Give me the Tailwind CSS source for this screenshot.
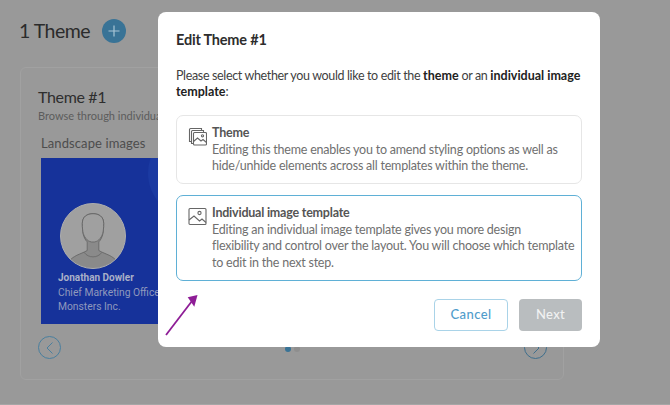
<!DOCTYPE html>
<html>
<head>
<meta charset="utf-8">
<script src="https://cdn.jsdelivr.net/npm/@tailwindcss/browser@4"></script>
</head>
<body class="m-0 overflow-hidden">
<div class="relative w-[670px] h-[405px] overflow-hidden bg-[#999999] font-['Lato','Open_Sans',sans-serif] border-b border-[#a6a6a6]">
  <div class="pt-[18px] pl-[19px] flex items-center h-[44px]">
    <h1 class="w-[83px] text-[19.5px] leading-[26px] tracking-[-0.5px] text-[#2b2b2b] font-normal">1 Theme</h1>
    <div class="w-[24px] h-[24px] rounded-full bg-[#397396] flex items-center justify-center">
      <svg width="12" height="12" viewBox="0 0 12 12" fill="none" stroke="#a9c6d6" stroke-width="1.2"><path d="M6 0.5V11.5M0.5 6H11.5"/></svg>
    </div>
  </div>
  <section class="mt-[23px] ml-[20px] w-[544px] h-[313px] rounded-[6px] border border-[#a1a1a1] pt-[19px] pl-[17px]">
    <h2 class="text-[16px] leading-[20px] tracking-[-0.35px] text-[#2e2e2e] font-normal">Theme #1</h2>
    <p class="mt-[1px] text-[11px] leading-[16px] tracking-[0px] text-[#5c5c5c] whitespace-nowrap">Browse through individual</p>
    <h3 class="mt-[11px] ml-[3px] text-[13px] leading-[16px] tracking-[0.1px] text-[#4d4d4d]">Landscape images</h3>
    <div class="relative mt-[7px] ml-[3px] w-[125px] h-[166px] bg-[#16329a] overflow-hidden">
      <div class="absolute left-[107px] top-[-30px] w-[90px] h-[90px] rounded-full bg-[#1b3aa2]"></div>
      <div class="absolute left-[19px] top-[45px] w-[66px] h-[66px] rounded-full bg-[#a0a0a0] border border-[#aeaeae] overflow-hidden">
        <svg width="64" height="64" viewBox="0 0 66 66" fill="none">
          <path d="M8 60C12 53 20 52 27 48V39C23 35 22 29 22 20C22 13 27 10 33 10S44 13 44 20C44 29 43 35 39 39V48C46 52 54 53 58 60V68H8Z" fill="#8a8a8a" stroke="#666666" stroke-width="0.9"/>
          <path d="M22 20C22 13 27 10 33 10S44 13 44 20C44 29 43 33 39 37C36 40 30 40 27 37C23 33 22 29 22 20Z" fill="#a0a0a0" stroke="#666666" stroke-width="0.9"/>
          <path d="M24 50C28 56 38 56 42 50" stroke="#666666" stroke-width="0.8"/>
        </svg>
      </div>
      <p class="absolute left-[17px] top-[113px] text-[10px] leading-[13px] font-bold font-['Roboto',sans-serif] text-[#a9b0c8] whitespace-nowrap">Jonathan Dowler</p>
      <p class="absolute left-[17px] top-[128px] text-[10.3px] leading-[13.5px] font-['Roboto',sans-serif] text-[#8f99bd] whitespace-nowrap">Chief Marketing Office<br>Monsters Inc.</p>
    </div>
    <div class="mt-[12px] ml-[0px] w-[23px] h-[23px] rounded-full border border-[#4a7f9e] flex items-center justify-center">
      <svg width="8" height="12" viewBox="0 0 8 12" fill="none" stroke="#4a7f9e" stroke-width="1"><path d="M6.5 0.5L1 6L6.5 11.5"/></svg>
    </div>
  </section>
  <div class="absolute left-[524px] top-[336px] w-[23px] h-[23px] rounded-full border border-[#3f6f8d] flex items-center justify-center">
    <svg width="8" height="12" viewBox="0 0 8 12" fill="none" stroke="#3f6f8d" stroke-width="1"><path d="M1.5 0.5L7 6L1.5 11.5"/></svg>
  </div>
  <div class="absolute left-[285px] top-[346px] flex gap-[3px]">
    <span class="w-[6px] h-[6px] rounded-full bg-[#397396]"></span>
    <span class="w-[6px] h-[6px] rounded-full bg-[#8e8e8e]"></span>
  </div>

  <div class="absolute left-[158px] top-[12px] w-[442px] h-[335px] bg-white rounded-[8px] pt-[18px] px-[18px] text-[#4a4a4a]">
    <h2 class="text-[14.5px] leading-[19px] tracking-[-0.2px] font-bold text-[#2d2d2d]">Edit Theme #1</h2>
    <p class="mt-[19px] text-[12.5px] leading-[16px] tracking-[-0.35px] text-[#3f3f3f] whitespace-nowrap">Please select whether you would like to edit the <b class="text-[#222] tracking-[0px]">theme</b> or an <b class="text-[#222] tracking-[0px]">individual image</b><br><b class="text-[#222] tracking-[0px]">template</b>:</p>
    <div class="mt-[15px] h-[69px] rounded-[7px] border border-[#e6e6e6] flex pl-[11px] pt-[9px]">
      <svg class="mt-[2px] shrink-0" width="19" height="19" viewBox="0 0 19 19" fill="none" stroke="#666666" stroke-width="1.1">
        <path d="M3 14.5H1.5V2.5A1 1 0 0 1 2.5 1.5H13.5V3"/>
        <path d="M5 16.5H3.5V4.5A1 1 0 0 1 4.5 3.5H15.5V5"/>
        <rect x="5.5" y="5.5" width="13" height="12.5" rx="1"/>
        <circle cx="14.5" cy="8.8" r="1.1"/>
        <path d="M5.5 14.5L9.5 11L13 14L15 12.5L18.5 15.5"/>
      </svg>
      <div class="ml-[5px] text-[12.5px] leading-[16.7px] tracking-[-0.22px]">
        <h3 class="font-bold text-[#555]">Theme</h3>
        <p class="text-[#707070]">Editing this theme enables you to amend styling options as well as<br>hide/unhide elements across all templates within the theme.</p>
      </div>
    </div>
    <div class="mt-[11px] h-[86px] rounded-[7px] border border-[#5fb0d6] flex pl-[11px] pt-[9px]">
      <svg class="mt-[2px] shrink-0" width="19" height="19" viewBox="0 0 19 19" fill="none" stroke="#666666" stroke-width="1.1">
        <rect x="1" y="1.5" width="17" height="16" rx="1"/>
        <circle cx="11.5" cy="6" r="1.6"/>
        <path d="M1 13L6 9L11.5 14L14 12L18 15.5"/>
      </svg>
      <div class="ml-[5px] text-[12.5px] leading-[16.7px] tracking-[-0.22px]">
        <h3 class="font-bold text-[#555]">Individual image template</h3>
        <p class="text-[#707070]">Editing an individual image template gives you more design<br>flexibility and control over the layout. You will choose which template<br>to edit in the next step.</p>
      </div>
    </div>
    <div class="mt-[18px] flex justify-end gap-[11px]">
      <button class="w-[74px] h-[32px] rounded-[4px] border border-[#a9d3e8] bg-white text-[#4f9ccb] text-[13px] tracking-[0.4px] font-medium">Cancel</button>
      <button class="w-[63px] h-[32px] rounded-[4px] bg-[#b9bdbf] text-[#f1f2f2] text-[13px] tracking-[0.3px] font-medium">Next</button>
    </div>
  </div>

  <svg class="absolute left-[160px] top-[290px]" width="44" height="50" viewBox="0 0 44 50" fill="none">
    <path d="M6 45L32 11" stroke="#8e1d96" stroke-width="1.8"/>
    <path d="M37.5 5L34.3 16.7L27.7 7.3Z" fill="#8e1d96"/>
  </svg>
</div>
</body>
</html>
